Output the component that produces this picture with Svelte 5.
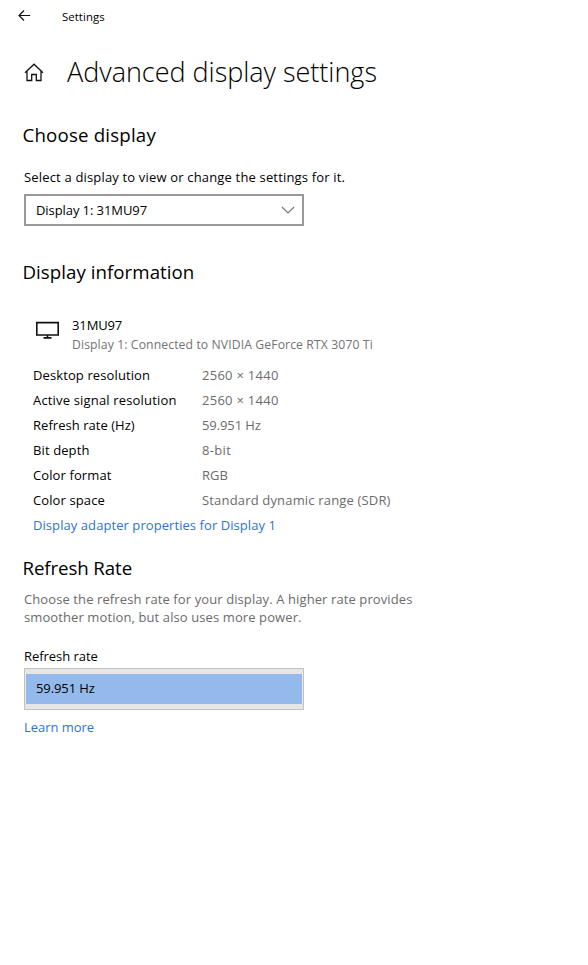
<script lang="ts">
    let displayName: string = '31MU97';
    let refreshRates: string[] = ['59.951 Hz'];
    let selectedRate: string = refreshRates[0];

    const details: { label: string; value: string; kind: string }[] = [
        { label: 'Desktop resolution', value: '2560 × 1440', kind: 'desktop' },
        { label: 'Active signal resolution', value: '2560 × 1440', kind: 'signal' },
        { label: 'Refresh rate (Hz)', value: '59.951 Hz', kind: 'refresh' },
        { label: 'Bit depth', value: '8-bit', kind: 'depth' },
        { label: 'Color format', value: 'RGB', kind: 'format' },
        { label: 'Color space', value: 'Standard dynamic range (SDR)', kind: 'space' }
    ];
</script>

<div class="window">
    <header class="title-bar">
        <button class="back" aria-label="Back">
            <svg width="14" height="12" viewBox="0 0 14 12">
                <path d="M12.2 5.5H1M6 .5L1 5.5L6 10.5" />
            </svg>
        </button>
        <span>Settings</span>
    </header>

    <div class="page-heading">
        <svg class="home" width="20" height="19" viewBox="0 0 20 19">
            <path d="M1 9.7L10 1.2L19 9.7M3 8V17.5H7.7V11.5H12.3V17.5H17V8" />
        </svg>
        <h1>Advanced display settings</h1>
    </div>

    <main>
        <h2 class="choose">Choose display</h2>
        <div class="prompt">Select a display to view or change the settings for it.</div>
        <button class="dropdown">
            <span>Display 1: {displayName}</span>
            <svg width="14" height="8" viewBox="0 0 14 8">
                <path d="M1 1L7 7L13 1" />
            </svg>
        </button>

        <h2 class="information">Display information</h2>
        <div class="monitor">
            <svg width="24" height="19" viewBox="0 0 24 19">
                <path d="M.8 1.6H22.2V14H.8ZM11.5 14V16.5M7.5 16.9H15.5" />
            </svg>
            <div>
                <div class="name">{displayName}</div>
                <div class="connection">Display 1: Connected to NVIDIA GeForce RTX 3070 Ti</div>
            </div>
        </div>
        <dl>
            {#each details as detail}
                <div class="detail {detail.kind}">
                    <dt>{detail.label}</dt>
                    <dd>{detail.value}</dd>
                </div>
            {/each}
        </dl>
        <a class="adapter" href="#adapter">Display adapter properties for Display 1</a>

        <h2 class="rate">Refresh Rate</h2>
        <p>
            Choose the refresh rate for your display. A higher rate provides<br />
            smoother motion, but also uses more power.
        </p>
        <div class="rate-label">Refresh rate</div>
        <div class="rates">
            {#each refreshRates as rate}
                <button class:selected={rate === selectedRate} on:click={() => (selectedRate = rate)}>
                    <span>{rate}</span>
                </button>
            {/each}
        </div>
        <a class="learn" href="#learn">Learn more</a>
    </main>
</div>

<style>
    :global(body) {
        background: #fff;
    }

    .window {
        box-sizing: border-box;
        width: 588px;
        height: 965px;
        overflow: hidden;
        font-family: 'Open Sans', 'Noto Sans', sans-serif;
        font-size: 13px;
        line-height: 18px;
        color: #000;
    }

    svg {
        display: block;
        flex-shrink: 0;
        fill: none;
        stroke: #111;
        stroke-width: 1.2;
    }

    button {
        display: flex;
        align-items: center;
        padding: 0;
        border: none;
        background: none;
        color: inherit;
        font: inherit;
        letter-spacing: inherit;
        text-align: left;
    }

    .title-bar {
        display: flex;
        align-items: center;
        height: 33px;
        padding-left: 18px;
        font-size: 11.4px;
        letter-spacing: 0.05px;
    }

    .back {
        width: 44px;
        padding-bottom: 2px;
    }

    .page-heading {
        display: flex;
        align-items: center;
        height: 79px;
        padding-left: 24px;
    }

    .home {
        margin-right: 23px;
        stroke-width: 1.3;
    }

    h1 {
        margin: -2px 0 0;
        font-size: 27px;
        font-weight: 300;
        line-height: 36px;
        letter-spacing: -0.02px;
        white-space: nowrap;
    }

    main {
        display: flex;
        flex-direction: column;
        align-items: flex-start;
        padding: 9px 0 0 24px;
        white-space: nowrap;
    }

    h2 {
        margin: 0 0 0 -1.5px;
        font-size: 18.7px;
        font-weight: 400;
        line-height: 28px;
    }

    .choose {
        letter-spacing: 0.18px;
    }

    .prompt {
        margin-top: 19px;
        letter-spacing: 0.17px;
    }

    .dropdown {
        justify-content: space-between;
        box-sizing: border-box;
        width: 280px;
        height: 32px;
        margin-top: 8px;
        padding: 0 7px 0 10px;
        border: 2px solid #999;
        letter-spacing: -0.08px;
    }

    .dropdown svg {
        stroke: #777;
    }

    .information {
        margin-top: 32px;
        letter-spacing: 0.04px;
    }

    .monitor {
        display: flex;
        margin: 30px 0 0 12px;
    }

    .monitor svg {
        margin: 5px 12px 0 0;
        stroke-width: 1.6;
    }

    .name {
        letter-spacing: -0.12px;
    }

    .connection {
        margin-top: 2px;
        font-size: 12.2px;
        letter-spacing: 0.11px;
        color: #737373;
    }

    dl {
        margin: 9px 0 0 9px;
    }

    .detail {
        display: flex;
        height: 25px;
        line-height: 25px;
        letter-spacing: 0.11px;
    }

    dt {
        width: 169px;
    }

    dd {
        margin: 0;
        color: #6b6b6b;
    }

    .desktop dd,
    .signal dd {
        letter-spacing: 0.27px;
    }

    .signal dt,
    .space dd {
        letter-spacing: 0.17px;
    }

    .refresh dt,
    .format dd {
        letter-spacing: 0.04px;
    }

    .refresh dd {
        letter-spacing: -0.1px;
    }

    .depth dd {
        letter-spacing: 0.35px;
    }

    a {
        color: #2f72d3;
        text-decoration: none;
    }

    .adapter {
        margin-left: 9px;
        line-height: 25px;
        letter-spacing: 0.07px;
    }

    .rate {
        margin-top: 16px;
        letter-spacing: -0.1px;
    }

    p {
        margin: 8px 0 0;
        letter-spacing: 0.1px;
        color: #6b6b6b;
    }

    .rate-label {
        margin-top: 21px;
        letter-spacing: -0.04px;
    }

    .rates {
        box-sizing: border-box;
        width: 280px;
        height: 42px;
        margin-top: 3px;
        padding: 5px 1px;
        border: 1px solid #c3c3c3;
        background: #e6e6e6;
        letter-spacing: -0.1px;
    }

    .rates button {
        width: 100%;
        height: 30px;
        padding: 0 10px 2px;
    }

    .rates .selected {
        background: #94baeb;
    }

    .learn {
        margin-top: 8px;
        letter-spacing: -0.04px;
    }
</style>
